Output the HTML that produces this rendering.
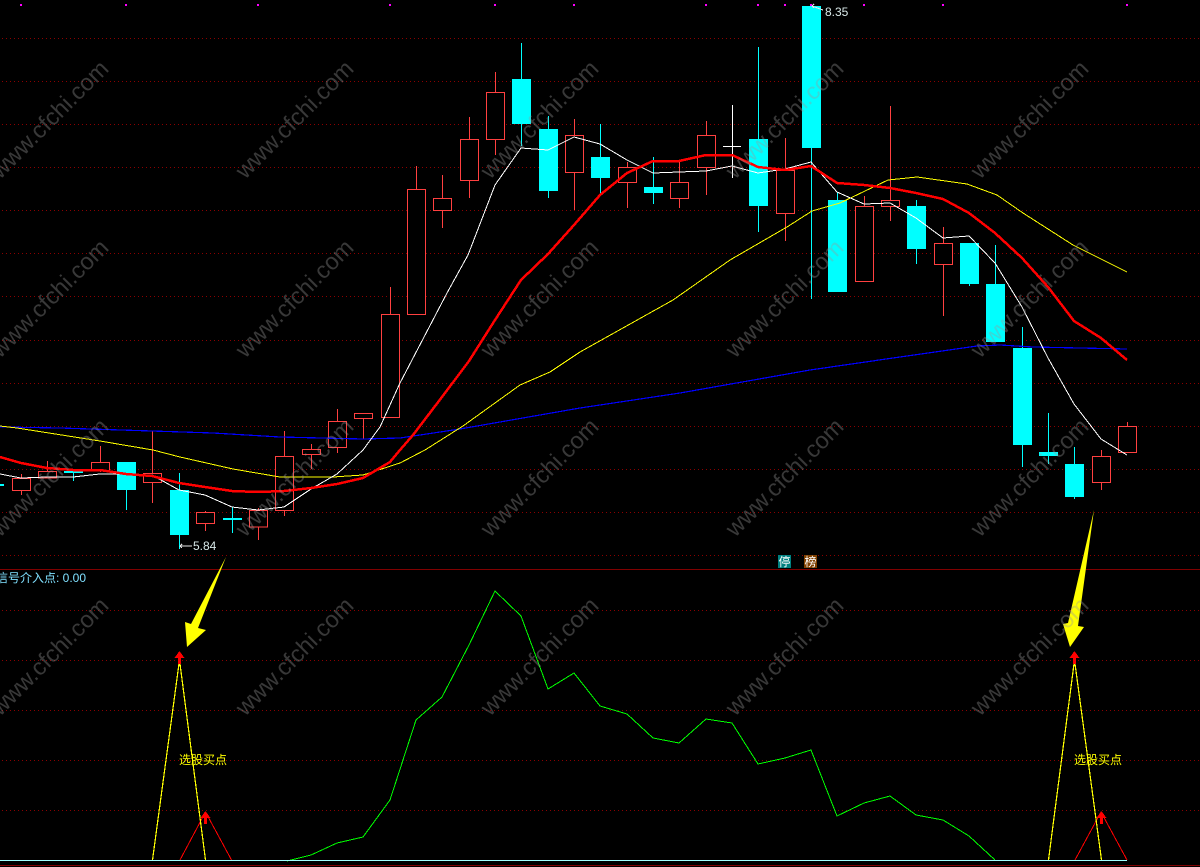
<!DOCTYPE html>
<html lang="zh"><head><meta charset="utf-8"><title>chart</title>
<style>
html,body{margin:0;padding:0;background:#000;width:1200px;height:867px;overflow:hidden}
svg{display:block}
.t{font-family:"Liberation Sans","WenQuanYi Zen Hei","Noto Sans CJK SC",sans-serif;font-size:12px}
.wm{font-family:"Liberation Sans",sans-serif;font-size:23.5px;fill:#999;opacity:.37;text-anchor:middle}
</style></head><body>
<svg width="1200" height="867" viewBox="0 0 1200 867" xmlns="http://www.w3.org/2000/svg">
<rect width="1200" height="867" fill="#000"/>
<g shape-rendering="crispEdges">
<path fill="none" stroke="#8c0000" stroke-dasharray="1 3" d="M2 38.5H1200M2 81.5H1200M2 124.5H1200M2 167.5H1200M2 210.5H1200M2 253.5H1200M2 296.5H1200M2 340.5H1200M2 383.5H1200M2 426.5H1200M2 469.5H1200M2 512.5H1200M2 555.5H1200M2 610.5H1200M2 660.5H1200M2 710.5H1200M2 760.5H1200M2 810.5H1200"/>
<path fill="none" stroke="#800000" d="M0 569.5H1200M0 865.5H1200"/>
<path fill="#f0f" d="M20 4h2v2h-2zM125 4h2v2h-2zM257 4h2v2h-2zM389 4h2v2h-2zM494 4h2v2h-2zM573 4h2v2h-2zM705 4h2v2h-2zM757 4h2v2h-2zM784 4h2v2h-2zM810 4h2v2h-2zM863 4h2v2h-2zM942 4h2v2h-2zM1126 4h2v2h-2z"/>
<!-- wicks -->
<path fill="none" stroke="#ff4040" d="M21.5 474V495M47.5 461V478M100.5 446V472M152.5 431V503M205.5 511V531M258.5 508V540M284.5 431V516M311.5 444V469M337.5 409V453M363.5 413V439M390.5 287V417M416.5 166V314M442.5 175V228M469.5 117V198M495.5 72V155M574.5 119V210M627.5 162V208M679.5 161V208M706.5 121V195M785.5 138V241M864.5 196V281M890.5 106V221M943.5 227V316M1101.5 450V490M1127.5 422V452"/>
<path fill="none" stroke="#0ff" d="M73.5 472V481M126.5 462V510M179.5 473V549M232.5 507V533M521.5 43V146M548.5 116V198M600.5 124V193M653.5 157V204M758.5 47V232M811.5 6V299M837.5 192V292M916.5 200V264M969.5 243V286M995.5 245V342M1022.5 327V467M1048.5 413V464M1074.5 447V499"/>
<path fill="none" stroke="#fff" d="M732.5 105V178M723 146.5H741"/>
<!-- hollow red bodies -->
<path fill="#000" stroke="#ff4040" d="M12.5 478.5h18v12h-18zM38.5 471.5h18v6.500h-18zM91.5 462.500h18v8.500h-18zM143.500 473.500h18v9h-18zM196.500 512.500h18v11h-18zM249.500 510.500h18v16.500h-18zM275.500 456.500h18v54h-18zM302.500 449.500h18v5h-18zM328.500 421.500h18v26h-18zM354.500 413.500h18v5h-18zM381.500 314.500h18v103h-18zM407.500 189.500h18v125h-18zM433.500 198.500h18v12h-18zM460.500 139.500h18v41h-18zM486.500 92.500h18v47h-18zM565.500 135.500h18v37h-18zM618.500 167.500h18v15h-18zM670.500 182.500h18v16h-18zM697.500 135.500h18v32h-18zM776.500 170.500h18v43h-18zM855.500 206.500h18v75h-18zM881.500 200.500h18v6h-18zM934.500 243.500h18v21h-18zM1092.500 456.500h18v26h-18zM1118.500 426.500h18v26h-18z"/>
<!-- filled cyan bodies -->
<path fill="#0ff" d="M0 484h4v2h-4zM64 471h19v2h-19zM117 462h19v28h-19zM170 490h19v45h-19zM223 518h19v2h-19zM512 79h19v45h-19zM539 129h19v62h-19zM591 157h19v21h-19zM644 187h19v6h-19zM749 139h19v67h-19zM802 6h19v142h-19zM828 200h19v92h-19zM907 206h19v43h-19zM960 243h19v41h-19zM986 284h19v58h-19zM1013 348h19v97h-19zM1039 452h19v4h-19zM1065 464h19v33h-19z"/>
<!-- moving averages -->
<polyline fill="none" stroke="#0000ff" stroke-width="1.2" points="0,427 60,428 213,433 280,437 363,439 400,438 460,429 580,408 680,393 810,370 900,357 977,346 1000,345 1033,347 1127,349"/>
<polyline fill="none" stroke="#ffff00" points="0,426 17,428 100,441 153,450 180,457 233,469 280,477 333,477 363,475 400,463 425,450 463,426 520,385 550,372 580,352 673,300 730,260 787,227 812,211 840,203 888,180 917,177 967,184 997,195 1023,213 1073,245 1127,272"/>
<polyline fill="none" stroke="#fff" points="0,474 21,478 47,477 73,477 100,474 126,474 152,475 179,490 205,495 232,507 258,510 284,507 311,489 337,474 363,450 380,427 400,383 447,293 468,255 495,185 521,148 548,150 574,137 600,144 627,160 653,173 679,172 706,171 732,166 758,173 785,169 811,162 837,192 864,204 890,203 916,218 943,238 969,236 995,263 1022,307 1048,358 1074,404 1101,439 1127,455"/>
<polyline fill="none" stroke="#ff0000" stroke-width="2.5" points="0,457 21,463 47,468 73,470 100,470 126,474 152,476 179,483 205,487 232,491 258,492 284,491 311,488 337,484 363,478 390,462 400,450 413,435 442,397 469,361 495,320 521,280 548,254 574,225 600,195 627,173 653,161 679,161 706,155 732,155 758,167 785,170 811,166 837,183 864,185 890,188 916,193 943,199 969,213 995,233 1022,258 1048,287 1074,321 1101,338 1127,360"/>
<path fill="none" stroke="#e8e8e8" d="M180 546H192M180 546L182 544M180 546L182 548M812 6L823 10M812 6L814 4M812 6L814 8"/>
<!-- indicator pane -->
<polyline fill="none" stroke="#00ff00" points="287,861 311,855 337,843 363,837 390,800 416,720 442,697 469,645 495,591 521,616 548,689 574,673 600,706 627,714 653,738 679,743 706,719 732,723 758,764 785,758 811,750 837,816 864,803 890,796 916,815 943,820 969,836 995,860"/>
<path fill="none" stroke="#ff0000" d="M180 860L205.500 812L231.500 860M1075 860L1101 812L1127 860"/>
<path fill="none" stroke="#ffff00" stroke-width="1.200" d="M152.500 860L179.500 660L205.500 860M1048.500 860L1074.500 660L1101.500 860"/>
<path fill="none" stroke="#a0ffff" d="M0 860.500H1127"/>
<path fill="#ff0000" d="M179.500 651L184.500 658H181V664H178V658H174.500zM205.500 811L210.500 818H207V824H204V818H200.500zM1074.500 651L1079.500 658H1076V664H1073V658H1069.500zM1101.500 811L1106.500 818H1103V824H1100V818H1096.500z"/>
</g>
<path fill="#ffff00" d="M226 557L198 628L206 630L187 647L185 622L191 624Z"/>
<path fill="#ffff00" d="M1094 510L1078 626L1084 627L1070 647L1063 624L1068 623Z"/>
<text class="t" x="193" y="550" fill="#d8e8e8">5.84</text>
<text class="t" x="825" y="16" fill="#d8e8e8">8.35</text>
<text class="t" x="-4" y="582" fill="#80e0ff">信号介入点: 0.00</text>
<text class="t" x="179" y="764" fill="#ffff00">选股买点</text>
<text class="t" x="1074" y="764" fill="#ffff00">选股买点</text>
<rect x="778" y="555" width="13" height="13" fill="#008080"/>
<rect x="804" y="555" width="13" height="13" fill="#804000"/>
<text class="t" x="778.500" y="566" fill="#fff">停</text>
<text class="t" x="804.500" y="566" fill="#fff">榜</text>
<g class="wm">
<text transform="translate(55 125) rotate(-45)">www.cfchi.com</text>
<text transform="translate(300 125) rotate(-45)">www.cfchi.com</text>
<text transform="translate(545 125) rotate(-45)">www.cfchi.com</text>
<text transform="translate(790 125) rotate(-45)">www.cfchi.com</text>
<text transform="translate(1035 125) rotate(-45)">www.cfchi.com</text>
<text transform="translate(55 304) rotate(-45)">www.cfchi.com</text>
<text transform="translate(300 304) rotate(-45)">www.cfchi.com</text>
<text transform="translate(545 304) rotate(-45)">www.cfchi.com</text>
<text transform="translate(790 304) rotate(-45)">www.cfchi.com</text>
<text transform="translate(1035 304) rotate(-45)">www.cfchi.com</text>
<text transform="translate(55 483) rotate(-45)">www.cfchi.com</text>
<text transform="translate(300 483) rotate(-45)">www.cfchi.com</text>
<text transform="translate(545 483) rotate(-45)">www.cfchi.com</text>
<text transform="translate(790 483) rotate(-45)">www.cfchi.com</text>
<text transform="translate(1035 483) rotate(-45)">www.cfchi.com</text>
<text transform="translate(55 662) rotate(-45)">www.cfchi.com</text>
<text transform="translate(300 662) rotate(-45)">www.cfchi.com</text>
<text transform="translate(545 662) rotate(-45)">www.cfchi.com</text>
<text transform="translate(790 662) rotate(-45)">www.cfchi.com</text>
<text transform="translate(1035 662) rotate(-45)">www.cfchi.com</text>
</g>
</svg>
</body></html>
